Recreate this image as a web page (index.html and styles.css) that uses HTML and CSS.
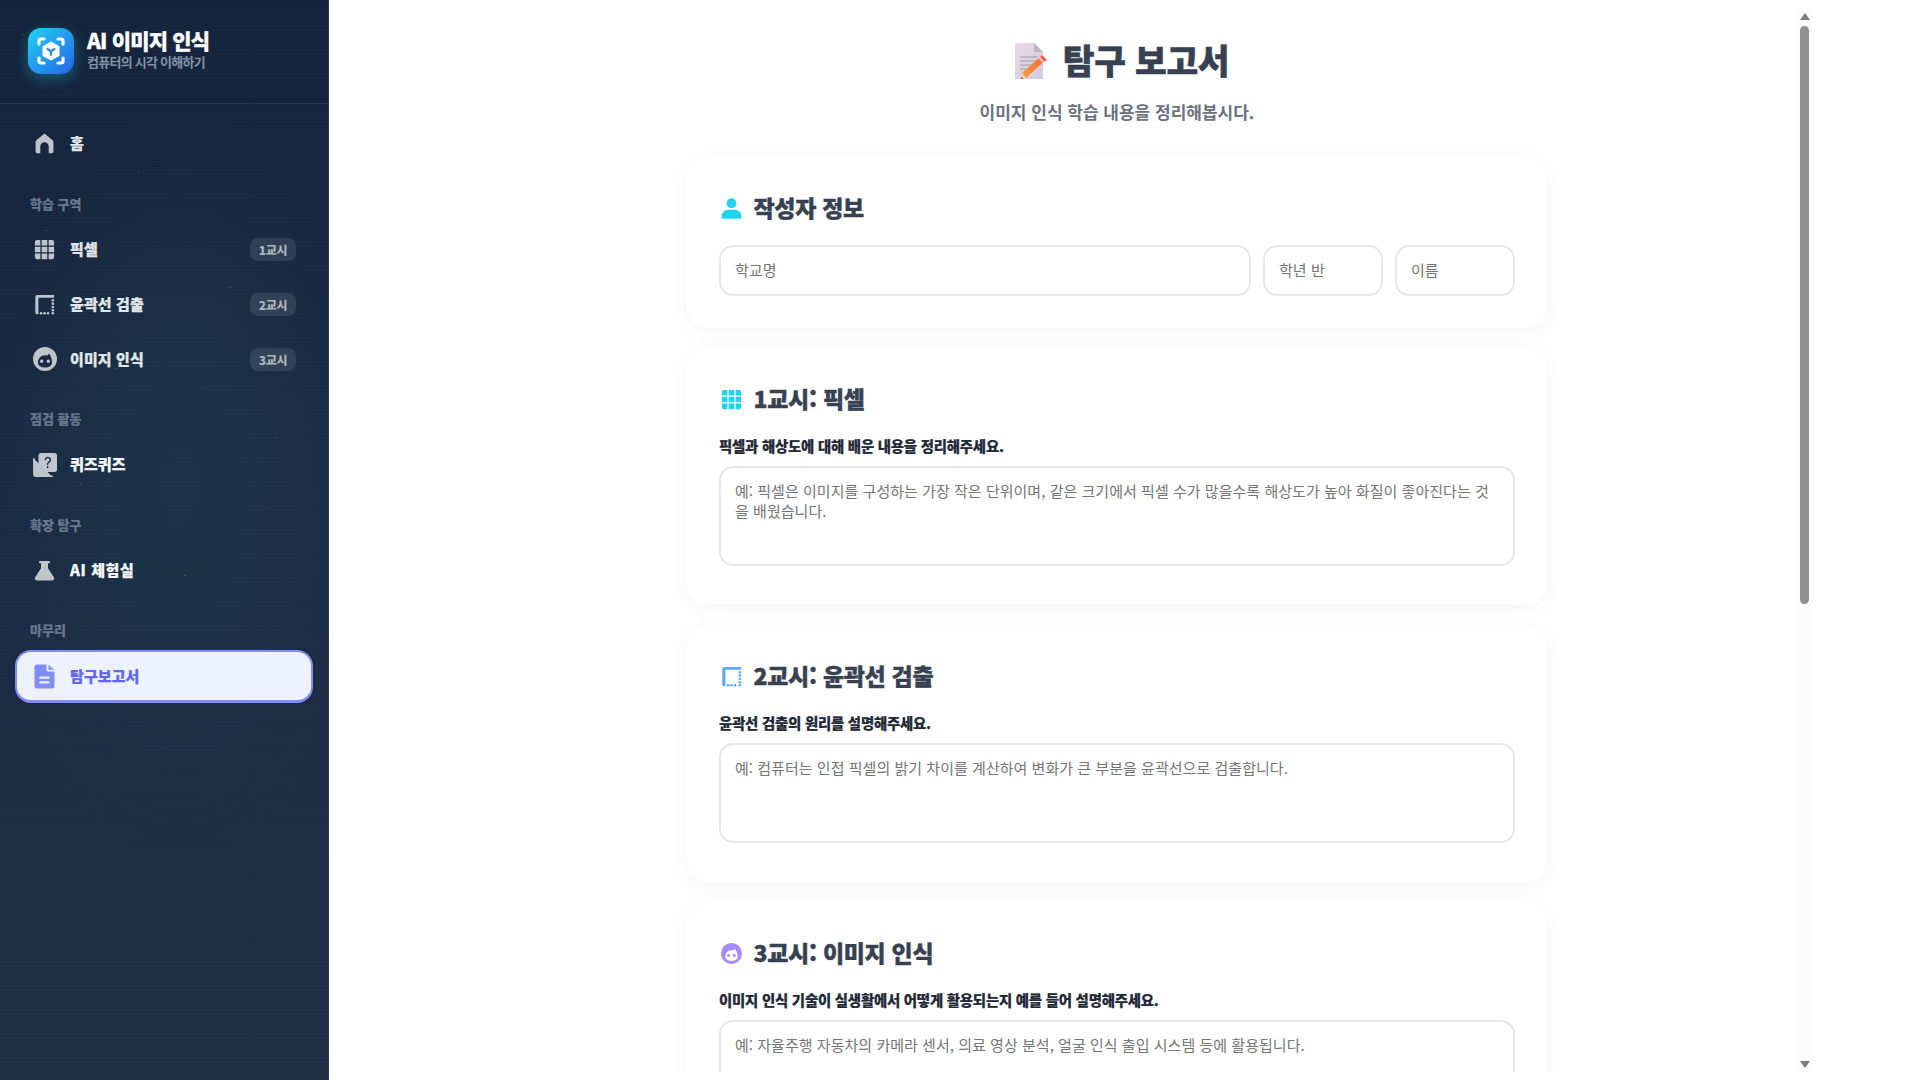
FILE: index.html
```html
<!DOCTYPE html>
<html lang="ko">
<head>
<meta charset="utf-8">
<title>탐구 보고서</title>
<link rel="stylesheet" href="styles.css">
</head>
<body>
<svg class="defs" width="0" height="0" aria-hidden="true">
  <symbol id="i-home" viewBox="0 0 24 24"><path d="M12 .5 21.300 8.300a2.500 2.500 0 0 1 .9 1.900V21a2 2 0 0 1-2 2H16.800v-7.500a4.800 4.800 0 0 0-9.600 0V23H3.800a2 2 0 0 1-2-2V10.200a2.500 2.500 0 0 1 .9-1.900Z"/></symbol>
  <symbol id="i-grid" viewBox="0 0 24 24"><path d="M3.500 1H7.300V7.300H1V3.500A2.500 2.500 0 0 1 3.500 1ZM8.800 1H15.200V7.300H8.800ZM16.700 1H20.500A2.500 2.500 0 0 1 23 3.500V7.300H16.700ZM1 8.800H7.300V15.200H1ZM8.800 8.800H15.200V15.200H8.800ZM16.700 8.800H23V15.200H16.700ZM1 16.700H7.300V23H3.500A2.500 2.500 0 0 1 1 20.500ZM8.800 16.700H15.200V23H8.800ZM16.700 16.700H23V20.500A2.500 2.500 0 0 1 20.500 23H16.700Z"/></symbol>
  <symbol id="i-edge" viewBox="0 0 24 24"><path d="M1.500 3.500A2.500 2.500 0 0 1 4 1H23V4.200H5V23H3.500A2 2 0 0 1 1.500 21Z"/><g><circle cx="21.500" cy="7.200" r="1.500"/><circle cx="21.500" cy="11" r="1.500"/><circle cx="21.500" cy="14.800" r="1.500"/><circle cx="21.500" cy="18.600" r="1.500"/><circle cx="21.500" cy="22" r="1.500"/><circle cx="8" cy="22" r="1.500"/><circle cx="12" cy="22" r="1.500"/><circle cx="16" cy="22" r="1.500"/></g></symbol>
  <symbol id="i-face" viewBox="0 0 24 24"><path fill-rule="evenodd" d="M12 0a12 12 0 1 1 0 24a12 12 0 0 1 0-24ZM5 15.500C5 19 8 20.500 12 20.500S19 19 19 15.500C19 11 17.500 8.500 15.800 6.500L14.500 8.500C13.500 8 10.500 8 9 8.800 6.500 10.200 5 12.500 5 15.500ZM8.700 12.600a1.700 1.700 0 1 0 0 3.400a1.700 1.700 0 0 0 0-3.400ZM15.300 12.600a1.700 1.700 0 1 0 0 3.400a1.700 1.700 0 0 0 0-3.400Z"/></symbol>
  <symbol id="i-flask" viewBox="0 0 24 24"><path d="M7 1H17a1.200 1.200 0 0 1 0 2.800H16V9.500L22.700 19.700A2.300 2.300 0 0 1 20.800 23.300H3.200A2.300 2.300 0 0 1 1.300 19.700L8 9.500V3.800H7A1.200 1.200 0 0 1 7 1Z"/></symbol>
  <symbol id="i-doc" viewBox="0 0 21 25"><path fill-rule="evenodd" d="M3 .5H12.500V6a1.500 1.500 0 0 0 1.500 1.500H20.500V22a2.500 2.500 0 0 1-2.500 2.500H3A2.500 2.500 0 0 1 .5 22V3A2.500 2.500 0 0 1 3 .5ZM5.500 12.500V14.800H15.500V12.500ZM5.500 17.200V19.500H15.500V17.200ZM14.500.8 20.200 5.800H14.500Z"/></symbol>
  <symbol id="i-user" viewBox="0 0 20 20"><circle cx="10" cy="5" r="4.700"/><path d="M6.500 11.300H13.500A6 6 0 0 1 19.500 17.300V18A1.800 1.800 0 0 1 17.700 19.800H2.300A1.800 1.800 0 0 1 .5 18V17.300A6 6 0 0 1 6.500 11.300Z"/></symbol>
</svg>

<div class="app">
  <aside class="sidebar">
    <span class="stars"></span>
    <header class="brand">
      <span class="logo">
        <svg viewBox="0 0 46 46" width="46" height="46" fill="none" stroke="#fff" stroke-width="3.200" stroke-linecap="round" stroke-linejoin="round">
          <path d="M11 16V13a2 2 0 0 1 2-2h3M30 11h3a2 2 0 0 1 2 2v3M35 30v3a2 2 0 0 1-2 2h-3M16 35h-3a2 2 0 0 1-2-2v-3"/>
          <path d="M23 14.500 30.500 18.800V27.300L23 31.500 15.500 27.300V18.800Z" fill="#fff" stroke-width="2"/>
          <path d="M18.800 20.500 23 23.200 27.200 20.500M23 23.200V27.800" stroke="#2a8fe8" stroke-width="2.200" stroke-linecap="butt"/>
        </svg>
      </span>
      <div class="brand-text">
        <div class="brand-title">AI 이미지 인식</div>
        <div class="brand-sub">컴퓨터의 시각 이해하기</div>
      </div>
    </header>
    <nav class="nav">
      <a class="item"><svg class="ico"><use href="#i-home"/></svg><span class="lbl">홈</span></a>
      <div class="sec">학습 구역</div>
      <a class="item"><svg class="ico"><use href="#i-grid"/></svg><span class="lbl">픽셀</span><span class="badge">1교시</span></a>
      <a class="item"><svg class="ico"><use href="#i-edge"/></svg><span class="lbl">윤곽선 검출</span><span class="badge">2교시</span></a>
      <a class="item"><svg class="ico big"><use href="#i-face"/></svg><span class="lbl">이미지 인식</span><span class="badge">3교시</span></a>
      <div class="sec">점검 활동</div>
      <a class="item">
        <svg class="ico big" viewBox="0 0 24 24" fill="none">
          <rect x="5.500" y="0" width="18.500" height="19" rx="2.500" fill="#c2c6cc"/>
          <path d="M1 6V21a2.500 2.500 0 0 0 2.500 2.500H19" stroke="#c2c6cc" stroke-width="1.800" stroke-linecap="round"/>
          <path d="M12.400 6.600a2.500 2.500 0 1 1 3.500 2.600c-.9.5-1.300 1-1.300 2M14.600 13.400v1" stroke="#1e3048" stroke-width="1.500" stroke-linecap="round"/>
        </svg>
        <span class="lbl bright">퀴즈퀴즈</span>
      </a>
      <div class="sec">확장 탐구</div>
      <a class="item"><svg class="ico"><use href="#i-flask"/></svg><span class="lbl bright wide">AI 체험실</span></a>
      <div class="sec">마무리</div>
      <a class="item active"><svg class="ico doc"><use href="#i-doc"/></svg><span class="lbl">탐구보고서</span></a>
    </nav>
  </aside>

  <main class="stage">
    <div class="scroller">
      <div class="report">
        <header class="page-head">
          <h1 class="page-title">
            <svg class="memo" viewBox="0 0 32 36" width="32" height="36">
              <defs>
                <linearGradient id="paper" x1="0" y1="0" x2="1" y2="1"><stop offset="0" stop-color="#e4dcea"/><stop offset="1" stop-color="#d3cad9"/></linearGradient>
                <linearGradient id="pen" x1="0" y1="1" x2="1" y2="0"><stop offset="0" stop-color="#f6a04a"/><stop offset="1" stop-color="#f26a2e"/></linearGradient>
              </defs>
              <path d="M0 0H19L28 9V36H0Z" fill="url(#paper)"/>
              <path d="M19 0 28 9H19Z" fill="#bdb4c6"/>
              <path d="M5 14H22M5 18H22M5 22H18M5 26H13" stroke="#a39bab" stroke-width="1"/>
              <path d="M7 30 24 15 28 19.500 11 35Z" fill="url(#pen)"/>
              <path d="M24 15 27 12 32 17 28 19.500Z" fill="#f25b4c"/>
              <path d="M23.500 15.500 25 14 29.500 18.500 28 20Z" fill="#f4c9b8"/>
              <path d="M7 30 11 35 6 36Z" fill="#f4d2a8"/>
              <path d="M6.500 34 8 35.600 6 36Z" fill="#3a2b35"/>
            </svg>
            <span class="title-text">탐구 보고서</span>
          </h1>
          <p class="page-sub">이미지 인식 학습 내용을 정리해봅시다.</p>
        </header>

        <section class="card">
          <h2 class="card-title"><svg class="h-ico user"><use href="#i-user"/></svg>작성자 정보</h2>
          <div class="fields">
            <input class="field grow" placeholder="학교명">
            <input class="field fixed" placeholder="학년 반">
            <input class="field fixed" placeholder="이름">
          </div>
        </section>

        <section class="card">
          <h2 class="card-title"><svg class="h-ico grid"><use href="#i-grid"/></svg>1교시: 픽셀</h2>
          <label class="q">픽셀과 해상도에 대해 배운 내용을 정리해주세요.</label>
          <textarea class="answer" placeholder="예: 픽셀은 이미지를 구성하는 가장 작은 단위이며, 같은 크기에서 픽셀 수가 많을수록 해상도가 높아 화질이 좋아진다는 것을 배웠습니다."></textarea>
        </section>

        <section class="card">
          <h2 class="card-title"><svg class="h-ico edge"><use href="#i-edge"/></svg>2교시: 윤곽선 검출</h2>
          <label class="q">윤곽선 검출의 원리를 설명해주세요.</label>
          <textarea class="answer" placeholder="예: 컴퓨터는 인접 픽셀의 밝기 차이를 계산하여 변화가 큰 부분을 윤곽선으로 검출합니다."></textarea>
        </section>

        <section class="card">
          <h2 class="card-title"><svg class="h-ico face"><use href="#i-face"/></svg>3교시: 이미지 인식</h2>
          <label class="q">이미지 인식 기술이 실생활에서 어떻게 활용되는지 예를 들어 설명해주세요.</label>
          <textarea class="answer" placeholder="예: 자율주행 자동차의 카메라 센서, 의료 영상 분석, 얼굴 인식 출입 시스템 등에 활용됩니다."></textarea>
        </section>
      </div>
      <div class="scrollbar" aria-hidden="true">
        <span class="arrow up"></span>
        <span class="thumb"></span>
        <span class="arrow down"></span>
      </div>
    </div>
  </main>
</div>
</body>
</html>
```
FILE: styles.css
```css
* { box-sizing: border-box; }
html, body { margin: 0; height: 100%; overflow: hidden; }
body {
  font-family: "Noto Sans CJK KR", "Noto Sans", sans-serif;
  background: #fff;
  color: #374151;
}
.defs { position: absolute; }
.app { display: flex; height: 1080px; }

/* Sidebar */
.sidebar {
  position: relative;
  width: 329px;
  flex: none;
  background:
    repeating-linear-gradient(0deg, rgba(255,255,255,.006) 0 1px, transparent 1px 3px),
    radial-gradient(ellipse 60% 35% at 55% 45%, #1b3449 0, rgba(27,52,73,0) 100%),
    linear-gradient(180deg, #14243c 0, #192a43 40%, #1f2e44 100%);
  border-right: 1px solid #1d3a52;
}
.stars {
  position: absolute; left: 0; top: 0; width: 1px; height: 1px;
  color: rgba(255,255,255,.22);
  box-shadow: 23px 34px, 69px 92px, 138px 172px, 46px 230px, 230px 287px, 115px 368px, 276px 437px, 80px 483px, 184px 575px;
}
.brand {
  display: flex; align-items: center; gap: 13px;
  height: 104px;
  padding: 0 28px 2px;
  border-bottom: 1px solid rgba(255,255,255,.07);
}
.logo {
  width: 46px; height: 46px; border-radius: 13px; flex: none; display: block;
  background: linear-gradient(135deg, #22d3ee, #2563eb);
  box-shadow: 0 4px 14px rgba(34,211,238,.35);
}
.logo svg { display: block; }
.brand-text { margin-top: -3px; }
.brand-title { font-size: 21px; line-height: 26px; font-weight: 800; color: #fff; letter-spacing: -.8px; -webkit-text-stroke: .3px; }
.brand-sub { font-size: 13px; line-height: 18px; font-weight: 700; color: #8292a4; letter-spacing: -.75px; }

.nav { padding: 13px 15px 0; }
.item {
  display: flex; align-items: center;
  height: 53px; margin-bottom: 2px;
  padding: 0 17px 0 19px;
  border-radius: 16px;
  color: #c9ced5;
}
.ico { width: 21px; height: 21px; flex: none; fill: #bfc4cb; }
.ico.big { width: 24px; height: 24px; margin: 0 -1.5px; }
.lbl { margin: -2px 0 0 15px; font-size: 15px; font-weight: 800; color: #e2e6ea; letter-spacing: .1px; -webkit-text-stroke: .25px; }
.lbl.bright { color: #f5f6f8; }
.lbl.wide { letter-spacing: .6px; }
.badge {
  margin-left: auto; width: 46px; height: 23px; border-radius: 8px;
  background: rgba(255,255,255,.1);
  font-size: 12px; line-height: 23px; font-weight: 800; text-align: center;
  color: #aeb4bc; letter-spacing: -.3px;
}
.sec {
  margin: 24.500px 0 10px 15px;
  font-size: 13px; line-height: 18px; font-weight: 800; color: #67768a; -webkit-text-stroke: .2px;
}
.item.active {
  background: #eef2ff;
  border: 2px solid #818cf8;
  border-bottom-width: 3px;
  padding-left: 17px;
  margin-top: 11px;
}
.active .lbl { color: #6366f1; }
.ico.doc { height: 25px; fill: #818cf8; }

/* Main */
.stage { flex: 1; min-width: 0; padding: 8px 108px; background: #fff; }
.scroller {
  position: relative;
  height: 1064px;
  overflow: hidden;
  padding-right: 15px;
}
.scrollbar { position: absolute; right: 0; top: 0; bottom: 0; width: 15px; background: #fbfbfb; }
.thumb { position: absolute; left: 2.500px; top: 18px; width: 9.500px; height: 578px; border-radius: 5px; background: #8f8f8f; }
.arrow { position: absolute; left: 2.500px; width: 0; height: 0; border-left: 5px solid transparent; border-right: 5px solid transparent; }
.arrow.up { top: 5px; border-bottom: 7px solid #7d7d7d; }
.arrow.down { bottom: 4px; border-top: 7px solid #7d7d7d; }

.report { width: 860px; margin: 0 auto; }

.page-head { text-align: center; padding-top: 27px; margin-bottom: 33px; }
.page-title {
  display: flex; justify-content: center; align-items: center; gap: 16px;
  margin: 0; height: 50px; padding-left: 10px;
  font-size: 34.500px; line-height: 50px; font-weight: 800; color: #374151; letter-spacing: -.3px; -webkit-text-stroke: .5px;
}
.title-text { margin-top: -2px; }
.memo { flex: none; margin-top: 2px; }
.page-sub { margin: 15px 0 0; font-size: 17px; line-height: 24px; font-weight: 700; color: #6b7280; }

.card {
  background: #fff;
  border-radius: 22px;
  padding: 31px 32px 32px;
  margin-bottom: 20px;
  box-shadow: 0 4px 20px rgba(0,0,0,.045);
}
.card-title {
  display: flex; align-items: center; gap: 12px;
  margin: 0 0 18px; height: 38px;
  font-size: 23px; line-height: 38px; font-weight: 800; color: #374151; letter-spacing: -.3px; -webkit-text-stroke: .4px;
}
.h-ico { width: 21px; height: 21px; flex: none; margin: 3px 0 0 1.500px; }
.h-ico.user, .h-ico.grid { fill: #22d3ee; }
.h-ico.edge { fill: #60a5fa; }
.h-ico.face { fill: #a78bfa; }

.fields { display: flex; gap: 12px; margin-top: 19px; }
.field, .answer {
  font-family: inherit; font-size: 15px; color: #374151; letter-spacing: .03px;
  border: 2px solid #e5e7eb; border-radius: 14px; background: #fff; outline: none;
}
.field::placeholder, .answer::placeholder { color: #757575; opacity: 1; }
.field { height: 51px; padding: 0 14px 3px; min-width: 0; }
.field.grow { flex: 1; }
.field.fixed { width: 120px; flex: none; }

.q { display: block; margin-bottom: 9px; font-size: 14.400px; line-height: 22px; font-weight: 800; color: #1f2937; letter-spacing: -.2px; -webkit-text-stroke: .2px; }
.answer {
  display: block; width: 100%; height: 100px; padding: 13px 14px 14px; margin-bottom: 7px;
  line-height: 20px; resize: none;
}
```
